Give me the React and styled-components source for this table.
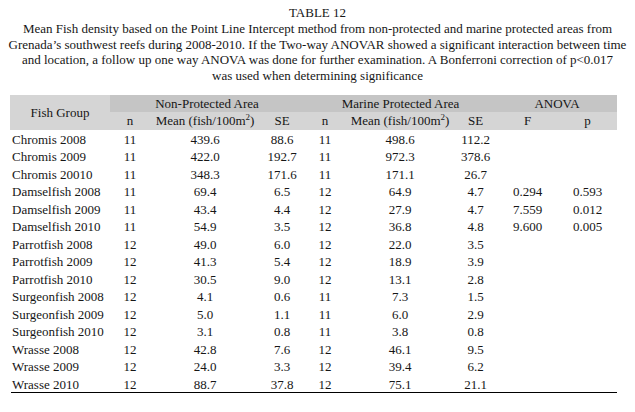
import React from "react";
import styled, { createGlobalStyle } from "styled-components";

const GlobalStyle = createGlobalStyle`
    body {
        margin: 0;
        background: #fff;
        color: #161616;
        font-family: "Liberation Serif", "Times New Roman", serif;
        font-size: 13px;
    }
`;

const Page = styled.div`
    width: 635px;
    padding-top: 5px;
`;

const Title = styled.div`
    text-align: center;
    line-height: 16px;
`;

const Caption = styled.p`
    margin: 0;
    text-align: center;
    line-height: 15.6px;
`;

const Table = styled.table`
    margin: 11.6px 0 0 10px;
    width: 607px;
    table-layout: fixed;
    border-collapse: separate;
    border-spacing: 0;
`;

// closing rule under the last row
const Rule = styled.div`
    margin-left: 11px;
    width: 606px;
    height: 1px;
    background: #000;
`;

const HeadCell = styled.th`
    padding: 0;
    font-weight: normal;
    text-align: center;
    line-height: 15px;
    background: ${(p) => (p.$dark ? "#c5c5c5" : "#d5d5d5")};
`;

const HeadRow = styled.tr`
    height: ${(p) => p.$h}px;
`;

const Row = styled.tr`
    height: 17.5px;
`;

const Cell = styled.td`
    height: 17.5px;
    box-sizing: border-box;
    padding: 1px 0 0 ${(p) => (p.$name ? "2px" : "0")};
    text-align: ${(p) => (p.$name ? "left" : "center")};
    line-height: 15px;
    white-space: nowrap;
`;

const Sup = styled.sup`
    font-size: 9px;
    line-height: 0;
`;

const widths = [100, 40, 110, 44, 42, 108, 43, 61, 59];

const rows = [
    ["Chromis 2008", "11", "439.6", "88.6", "11", "498.6", "112.2", "", ""],
    ["Chromis 2009", "11", "422.0", "192.7", "11", "972.3", "378.6", "", ""],
    ["Chromis 20010", "11", "348.3", "171.6", "11", "171.1", "26.7", "", ""],
    ["Damselfish 2008", "11", "69.4", "6.5", "12", "64.9", "4.7", "0.294", "0.593"],
    ["Damselfish 2009", "11", "43.4", "4.4", "12", "27.9", "4.7", "7.559", "0.012"],
    ["Damselfish 2010", "11", "54.9", "3.5", "12", "36.8", "4.8", "9.600", "0.005"],
    ["Parrotfish 2008", "12", "49.0", "6.0", "12", "22.0", "3.5", "", ""],
    ["Parrotfish 2009", "12", "41.3", "5.4", "12", "18.9", "3.9", "", ""],
    ["Parrotfish 2010", "12", "30.5", "9.0", "12", "13.1", "2.8", "", ""],
    ["Surgeonfish 2008", "12", "4.1", "0.6", "11", "7.3", "1.5", "", ""],
    ["Surgeonfish 2009", "12", "5.0", "1.1", "11", "6.0", "2.9", "", ""],
    ["Surgeonfish 2010", "12", "3.1", "0.8", "11", "3.8", "0.8", "", ""],
    ["Wrasse 2008", "12", "42.8", "7.6", "12", "46.1", "9.5", "", ""],
    ["Wrasse 2009", "12", "24.0", "3.3", "12", "39.4", "6.2", "", ""],
    ["Wrasse 2010", "12", "88.7", "37.8", "12", "75.1", "21.1", "", ""],
];

const Mean = () => (
    <>Mean (fish/100m<Sup>2</Sup>)</>
);

export default function App() {
    return (
        <Page>
            <GlobalStyle />
            <Title>TABLE 12</Title>
            <Caption>
                Mean Fish density based on the Point Line Intercept method from non-protected and marine protected areas from<br />
                Grenada’s southwest reefs during 2008-2010. If the Two-way ANOVAR showed a significant interaction between time<br />
                and location, a follow up one way ANOVA was done for further examination. A Bonferroni correction of p&lt;0.017<br />
                was used when determining significance
            </Caption>
            <Table>
                <colgroup>
                    {widths.map((w, i) => <col key={i} style={{ width: w }} />)}
                </colgroup>
                <thead>
                    <HeadRow $h={17}>
                        <HeadCell rowSpan={2}>Fish Group</HeadCell>
                        <HeadCell $dark colSpan={3}>Non-Protected Area</HeadCell>
                        <HeadCell $dark colSpan={3}>Marine Protected Area</HeadCell>
                        <HeadCell $dark colSpan={2}>ANOVA</HeadCell>
                    </HeadRow>
                    <HeadRow $h={18}>
                        <HeadCell>n</HeadCell>
                        <HeadCell><Mean /></HeadCell>
                        <HeadCell>SE</HeadCell>
                        <HeadCell>n</HeadCell>
                        <HeadCell><Mean /></HeadCell>
                        <HeadCell>SE</HeadCell>
                        <HeadCell>F</HeadCell>
                        <HeadCell>p</HeadCell>
                    </HeadRow>
                </thead>
                <tbody>
                    {rows.map((r) => (
                        <Row key={r[0]}>
                            {r.map((v, i) => (
                                <Cell key={i} $name={i === 0}>{v}</Cell>
                            ))}
                        </Row>
                    ))}
                </tbody>
            </Table>
            <Rule />
        </Page>
    );
}
